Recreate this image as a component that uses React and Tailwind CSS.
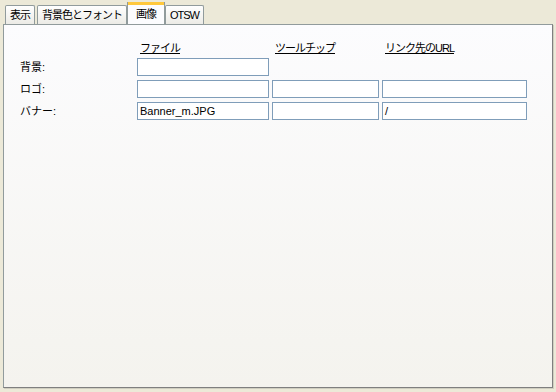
import React from 'react';

const tabs = ['表示', '背景色とフォント', '画像', 'OTSW'];

const Tab = ({ label, active }) => {
  if (active) {
    return (
      <div className="relative z-10 -mx-[2px] -mb-px flex h-[22px] items-center border-x border-[#919b9c] bg-[#fcfcfe] px-[8px] pt-[2px] shadow-[inset_0_3px_0_#ffc83c,inset_0_1px_0_#e68b2c]">
        {label}
      </div>
    );
  }
  return (
    <div className="mt-[3px] flex h-[19px] items-center rounded-t-[2px] border border-b-0 border-[#919b9c] bg-gradient-to-b from-white to-[#ecebe6] px-[4px]">
      {label}
    </div>
  );
};

const Field = ({ w, value }) => (
  <div className={`flex h-[18px] items-center border border-[#7f9db9] bg-white px-[2px] ${w}`}>
    {value}
  </div>
);

export default function App() {
  return (
    <div
      className="h-[392px] w-[556px] bg-[#ece9d8] px-[3px] pt-[2px] text-[11px] text-black"
      style={{ fontFamily: '"Liberation Sans", "Noto Sans CJK JP", sans-serif' }}
    >
      <div className="flex gap-[2px] pl-[2px] tracking-[-1px]">
        {tabs.map((t) => (
          <Tab key={t} label={t} active={t === '画像'} />
        ))}
      </div>
      <div className="h-[364px] w-[550px] border border-[#919b9c] border-b-[#7f7f7f] border-r-[#7f7f7f] bg-gradient-to-b from-[#fcfcfe] to-[#f4f3ee] shadow-[1px_1px_0_#d0cec0]">
        <div className="pl-[16px] pt-[15px]">
          <div className="flex h-[16px] items-start tracking-[-1px]">
            <div className="w-[120px]" />
            <div className="w-[135px]"><span className="underline">ファイル</span></div>
            <div className="w-[110px]"><span className="underline">ツールチップ</span></div>
            <div><span className="underline">リンク先のURL</span></div>
          </div>
          <div className="mt-[2px] flex flex-col gap-[4px]">
            <div className="flex items-center gap-[3px]">
              <div className="w-[114px]">背景:</div>
              <Field w="w-[132px]" />
            </div>
            <div className="flex items-center gap-[3px]">
              <div className="w-[114px]">ロゴ:</div>
              <Field w="w-[132px]" />
              <Field w="w-[107px]" />
              <Field w="w-[145px]" />
            </div>
            <div className="flex items-center gap-[3px]">
              <div className="w-[114px]">バナー:</div>
              <Field w="w-[132px]" value="Banner_m.JPG" />
              <Field w="w-[107px]" />
              <Field w="w-[145px]" value="/" />
            </div>
          </div>
        </div>
      </div>
    </div>
  );
}
